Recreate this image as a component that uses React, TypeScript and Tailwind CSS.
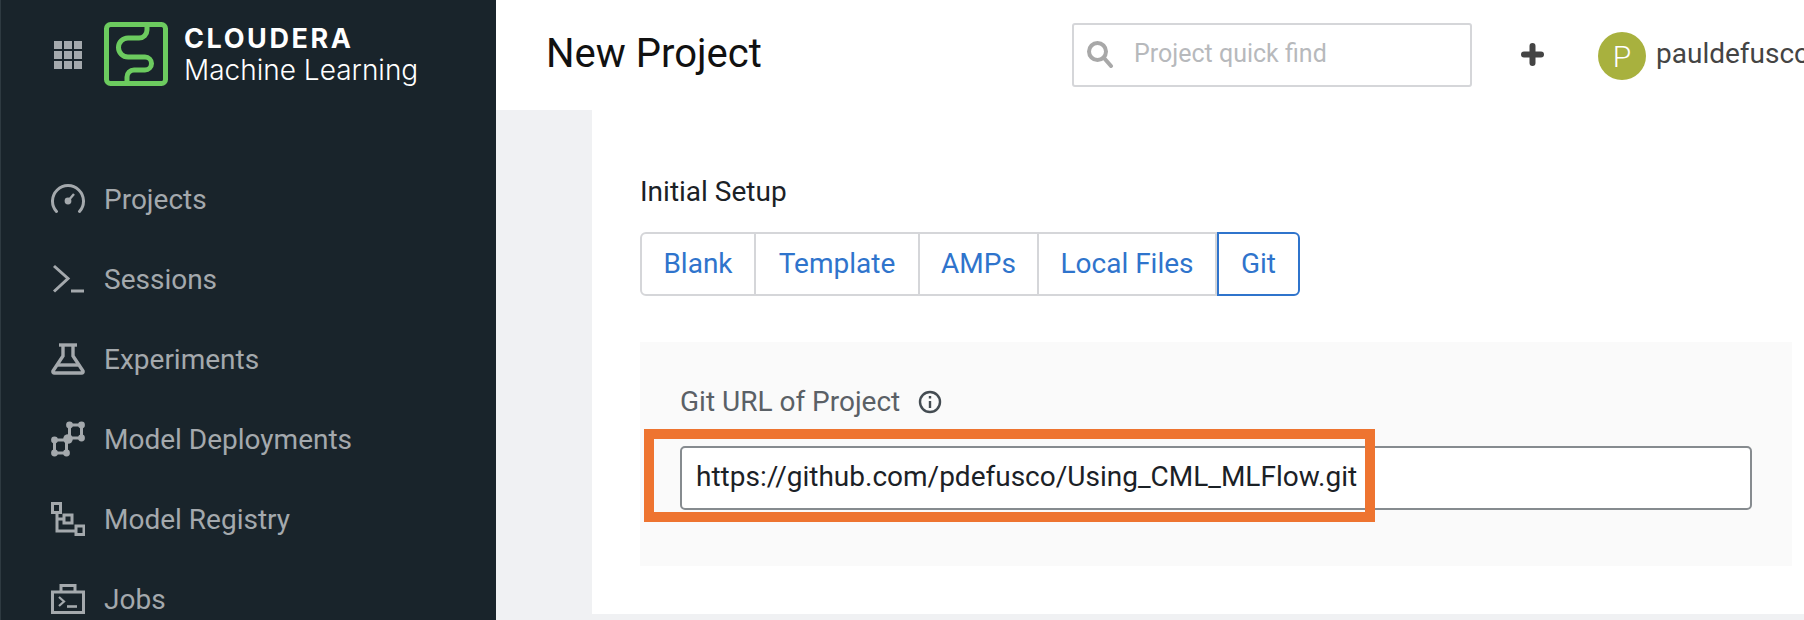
import React from "react";

const C = "#a4a9ad";

function Gauge() {
  return (
    <svg width="34" height="30" viewBox="0 0 34 30" fill="none" stroke={C} strokeWidth="3">
      <path d="M5.5 27.5 A15.5 15.5 0 1 1 28.5 27.5" strokeLinecap="round" />
      <circle cx="17" cy="17" r="3.4" fill={C} stroke="none" />
      <path d="M17 17 L23 10" strokeWidth="2.4" />
    </svg>
  );
}
function Prompt() {
  return (
    <svg width="34" height="30" viewBox="0 0 34 30" fill="none" stroke={C} strokeWidth="3">
      <path d="M3 2 L17 14.5 L3 27.5" />
      <path d="M20 27 H33" />
    </svg>
  );
}
function Flask() {
  return (
    <svg width="34" height="32" viewBox="0 0 34 32" fill="none" stroke={C} strokeWidth="3.4">
      <path d="M8 2 H26" />
      <path d="M12 2 V13 L2 28 Q1.5 30 3.5 30 H30.5 Q32.5 30 32 28 L22 13 V2" />
      <path d="M7 22 H27" />
    </svg>
  );
}
function Deploy() {
  return (
    <svg width="34" height="36" viewBox="0 0 34 36" fill="none" stroke={C} strokeWidth="3">
      <rect x="3.5" y="19" width="12" height="13" />
      <rect x="18.5" y="4" width="12" height="13" />
      <g fill={C} stroke="none">
        <circle cx="3.5" cy="19" r="3.4" />
        <circle cx="3.5" cy="32" r="3.4" />
        <circle cx="15.5" cy="32" r="3.4" />
        <circle cx="17" cy="18" r="4.8" />
        <circle cx="18.5" cy="4" r="3.4" />
        <circle cx="30.5" cy="4" r="3.4" />
        <circle cx="30.5" cy="17" r="3.4" />
      </g>
    </svg>
  );
}
function Registry() {
  return (
    <svg width="34" height="34" viewBox="0 0 34 34" fill="none" stroke={C} strokeWidth="3">
      <rect x="1.5" y="1.5" width="8" height="9" />
      <rect x="13" y="13" width="8" height="8" />
      <rect x="25" y="24" width="8" height="8.5" />
      <path d="M6 10.5 V29 H25 M6 17 H13" />
    </svg>
  );
}
function Jobs() {
  return (
    <svg width="34" height="30" viewBox="0 0 34 30" fill="none" stroke={C} strokeWidth="3">
      <rect x="1.5" y="8" width="31" height="20.5" />
      <path d="M10 8 V1.5 H24 V8" />
      <path d="M8 13 L13 17.5 L8 22" strokeWidth="2.2" />
      <path d="M16 22.5 H26" strokeWidth="2.6" />
    </svg>
  );
}

const items = [
  { label: "Projects", icon: <Gauge /> },
  { label: "Sessions", icon: <Prompt /> },
  { label: "Experiments", icon: <Flask /> },
  { label: "Model Deployments", icon: <Deploy /> },
  { label: "Model Registry", icon: <Registry /> },
  { label: "Jobs", icon: <Jobs /> },
];

const tabs = [
  { label: "Blank", w: "w-[116px]" },
  { label: "Template", w: "w-[164px]" },
  { label: "AMPs", w: "w-[119px]" },
  { label: "Local Files", w: "w-[178px]" },
];

export default function App() {
  return (
    <div className="flex h-[620px] w-[1804px] overflow-hidden bg-[#f0f1f3] font-['Roboto',sans-serif]">
      <aside className="h-full w-[496px] shrink-0 overflow-hidden border-l border-[#2e3a41] bg-[#19242b]">
        <div className="flex h-[159px] items-start pl-[53px] pt-[22px]">
          <div className="mt-[19px] grid grid-cols-3 gap-[2px]">
            {Array.from({ length: 9 }).map((_, i) => (
              <span key={i} className="h-[8px] w-[8px] bg-[#a4a9ad]" />
            ))}
          </div>
          <svg className="ml-[22px] shrink-0" width="64" height="64" viewBox="0 0 64 64" fill="none" stroke="#6ccb5f" strokeWidth="5">
            <rect x="2.5" y="2.5" width="59" height="59" rx="4" />
            <path d="M43 3 V8 A8 8 0 0 1 35 16 H24 A9.5 9.5 0 0 0 24 35 H41 A6.5 6.5 0 0 1 41 48 H30 A7 7 0 0 0 23 55 V62" />
          </svg>
          <div className="ml-[16px] flex flex-col text-white">
            <span className="mt-[1px] font-['Inter',sans-serif] text-[27px] font-bold leading-[32px] tracking-[2.6px]">CLOUDERA</span>
            <span className="mt-[-3px] font-['Inter',sans-serif] text-[28px] font-light leading-[36px]">Machine Learning</span>
          </div>
        </div>
        <nav className="flex flex-col">
          {items.map((it) => (
            <div key={it.label} className="flex h-[80px] shrink-0 items-center pl-[50px]">
              <span className="flex w-[34px] justify-center">{it.icon}</span>
              <span className="ml-[19px] pt-[2px] text-[28px] text-[#a4a9ad]">{it.label}</span>
            </div>
          ))}
        </nav>
      </aside>

      <main className="flex h-full min-w-0 flex-1 flex-col">
        <header className="flex h-[110px] shrink-0 items-center overflow-hidden bg-white">
          <h1 className="w-[576px] shrink-0 pb-[2px] pl-[50px] text-[40px] font-normal text-[#111]">New Project</h1>
          <div className="flex h-[64px] w-[400px] shrink-0 items-center rounded-[3px] border-2 border-[#d5d6d9] pb-[2px] pl-[12px]">
            <svg width="28" height="28" viewBox="0 0 28 28" fill="none" stroke="#a8a8a8" strokeWidth="4">
              <circle cx="11.5" cy="11.5" r="8.5" />
              <path d="M18 18 L25 26" strokeLinecap="round" />
            </svg>
            <span className="ml-[20px] text-[25px] text-[#b7b9bc]">Project quick find</span>
          </div>
          <svg className="mb-[2px] ml-[49px] shrink-0" width="23" height="23" viewBox="0 0 23 23" fill="none" stroke="#444" strokeWidth="6" strokeLinecap="round">
            <path d="M11.5 3 V20 M3 11.5 H20" />
          </svg>
          <span className="ml-[54px] mt-[2px] flex h-[48px] w-[48px] shrink-0 items-center justify-center rounded-full bg-[#a8b13e] text-[30px] font-light text-white">P</span>
          <span className="ml-[10px] shrink-0 whitespace-nowrap pb-[2px] text-[28px] text-[#444]">pauldefusco</span>
        </header>

        <div className="min-h-0 flex-1 pb-[6px] pl-[96px]">
          <section className="h-full bg-white pl-[48px] pr-[12px]">
            <div className="pt-[64px] text-[28px] leading-[36px] text-[#1b2126]">Initial Setup</div>
            <div className="mt-[22px] flex h-[64px] text-[28px] text-[#2f74cc]">
              {tabs.map((t, i) => (
                <div
                  key={t.label}
                  className={
                    t.w +
                    " flex items-center justify-center border-y-2 border-r-2 border-[#d5d6d9]" +
                    (i === 0 ? " rounded-l-[6px] border-l-2" : "")
                  }
                >
                  {t.label}
                </div>
              ))}
              <div className="flex w-[83px] items-center justify-center rounded-r-[6px] border-2 border-[#2f74cc]">Git</div>
            </div>
            <div className="mt-[46px] h-[224px] bg-[#fafafa] px-[40px] pt-[40px]">
              <div className="flex h-[40px] items-center text-[28px] text-[#5a6066]">
                Git URL of Project
                <svg className="ml-[18px]" width="24" height="24" viewBox="0 0 24 24" fill="none" stroke="#444c52" strokeWidth="2.4">
                  <circle cx="12" cy="12" r="10" />
                  <path d="M12 11 V18 M12 6 V8.6" />
                </svg>
              </div>
              <div className="relative mt-[24px]">
                <div className="flex h-[64px] items-center rounded-[5px] border-2 border-[#868b8f] bg-white pb-[2px] pl-[14px] text-[28px] text-[#1b2126]">
                  https://github.com/pdefusco/Using_CML_MLFlow.git
                </div>
                <div className="absolute left-[-36px] top-[-17px] h-[93px] w-[731px] border-[10px] border-[#ee7430]" />
              </div>
            </div>
          </section>
        </div>
      </main>
    </div>
  );
}
